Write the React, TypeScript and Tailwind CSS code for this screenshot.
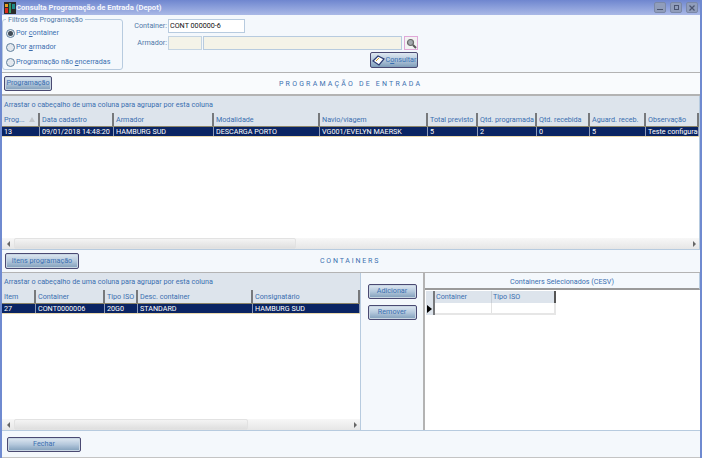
import React from 'react'

const topColumns = [
    { label: 'Prog...', width: 'w-[38px]', value: '13' },
    { label: 'Data cadastro', width: 'w-[74px]', value: '09/01/2018 14:48:20' },
    { label: 'Armador', width: 'w-[100px]', value: 'HAMBURG SUD' },
    { label: 'Modalidade', width: 'w-[106px]', value: 'DESCARGA PORTO' },
    { label: 'Navio/viagem', width: 'w-[108px]', value: 'VG001/EVELYN MAERSK' },
    { label: 'Total previsto', width: 'w-[50px]', value: '5' },
    { label: 'Qtd. programada', width: 'w-[59px]', value: '2' },
    { label: 'Qtd. recebida', width: 'w-[53px]', value: '0' },
    { label: 'Aguard. receb.', width: 'w-[56px]', value: '5' },
    { label: 'Observação', width: 'w-[53px]', value: 'Teste configuração' },
]

const bottomColumns = [
    { label: 'Item', width: 'w-[34px]', value: '27' },
    { label: 'Container', width: 'w-[69px]', value: 'CONT0000006' },
    { label: 'Tipo ISO', width: 'w-[33px]', value: '20G0' },
    { label: 'Desc. container', width: 'w-[115px]', value: 'STANDARD' },
    { label: 'Consignatário', width: 'w-[107px]', value: 'HAMBURG SUD' },
]

type Column = { label: string; width: string; value: string }

const WinButton = ({ label, className }: { label: string; className: string }) => (
    <button className={`flex items-center justify-center rounded-[2px] border border-[#4a4a72] bg-gradient-to-b from-[#dfe8f1] via-[#b4c8dc] to-[#7f9db9] text-[#3a6fb0] shadow-[inset_0_0_0_1px_#c9d6e3] ${className}`}>
        {label}
    </button>
)

const Header = ({ label, width, sorted }: { label: string; width: string; sorted?: boolean }) => (
    <div className={`relative h-[13px] shrink-0 overflow-hidden whitespace-nowrap border-r-2 border-[#77797c] bg-[#dde4ec] pl-[2px] leading-[13px] text-[#3a6fb0] ${width}`}>
        {label}
        {sorted && <span className="absolute right-[3px] top-[4px] h-0 w-0 border-x-[3px] border-b-[5px] border-x-transparent border-b-[#c3c7cc]" />}
    </div>
)

const Grid = ({ columns, scrollWidth, sortFirst }: { columns: Column[]; scrollWidth: string; sortFirst?: boolean }) => (
    <div className="flex min-h-0 min-w-0 flex-1 flex-col overflow-hidden bg-white">
        <div className="h-[17px] shrink-0 bg-[#dde4ec] pl-[2px] leading-[18px] text-[#3a6fb0]">
            Arrastar o cabeçalho de uma coluna para agrupar por esta coluna
        </div>
        <div className="flex shrink-0">
            {columns.map((c, i) => (
                <Header key={c.label} label={c.label} width={c.width} sorted={sortFirst && i === 0} />
            ))}
        </div>
        <div className="flex h-[11px] shrink-0 border-y border-b-[#e9d8ac] border-t-[#8b8468] bg-[#0a2463] text-white">
            {columns.map(c => (
                <div key={c.label} className={`shrink-0 overflow-hidden whitespace-nowrap border-r border-[#8c9ab8] pl-[2px] leading-[9px] ${c.width}`}>
                    {c.value}
                </div>
            ))}
        </div>
        <div className="flex-1" />
        <div className="flex h-[11px] shrink-0 items-center bg-gradient-to-b from-[#f7f7f7] to-[#e6e6e6]">
            <div className="flex w-[12px] shrink-0 justify-center">
                <span className="h-0 w-0 border-y-[3px] border-r-[3px] border-y-transparent border-r-[#666]" />
            </div>
            <div className={`h-[11px] rounded-[2px] border border-[#e2e2e2] bg-gradient-to-b from-[#f4f4f4] to-[#dfdfdf] ${scrollWidth}`} />
            <div className="flex flex-1 justify-end pr-[3px]">
                <span className="h-0 w-0 border-y-[3px] border-l-[3px] border-y-transparent border-l-[#666]" />
            </div>
        </div>
    </div>
)

const Radio = ({ label, checked }: { label: React.ReactNode; checked?: boolean }) => (
    <div className="flex h-[14.5px] items-center whitespace-nowrap text-[#3a6fb0]">
        <span className="mr-[1px] flex h-[9px] w-[9px] shrink-0 items-center justify-center rounded-full border border-[#5f7f9c] bg-[#e3e8ee]">
            {checked && <span className="h-[5px] w-[5px] rounded-full bg-[#3f4a55]" />}
        </span>
        {label}
    </div>
)

const App = () => {
    return (
        <div className="flex h-[458px] w-[702px] flex-col overflow-hidden border-x-2 border-x-[#6f8ad0] bg-[#f4f8fc] font-['Roboto',sans-serif] text-[7.2px]">
            {/* barra de titulo */}
            <div className="-mx-[2px] flex h-[15px] shrink-0 items-center bg-gradient-to-b from-[#6f86cf] to-[#aab9e6] pl-[4px] pr-[4px]">
                <svg width="12" height="12" viewBox="0 0 12 12" className="shrink-0">
                    <rect width="12" height="12" fill="#2a2a2a" />
                    <rect x="1" y="6" width="3" height="5" fill="#d92b1c" />
                    <rect x="1" y="2" width="3" height="3" fill="#e8a020" />
                    <rect x="5" y="1" width="2" height="10" fill="#2f9a6a" />
                    <rect x="8" y="2" width="3" height="5" fill="#1f8a8a" />
                </svg>
                <span className="text-[7.7px] font-bold text-[#f4f6fc]">Consulta Programação de Entrada (Depot)</span>
                <div className="ml-auto flex gap-[4px]">
                    <div className="flex h-[11px] w-[12px] items-end justify-center rounded-[2px] border border-[#7a88a8] bg-[#909dbb] pb-[2px]">
                        <span className="h-[1px] w-[6px] bg-[#4a5470]" />
                    </div>
                    <div className="flex h-[11px] w-[12px] items-center justify-center rounded-[2px] border border-[#7a88a8] bg-[#909dbb]">
                        <span className="h-[5px] w-[5px] border border-[#4a5470]" />
                    </div>
                    <div className="flex h-[11px] w-[12px] items-center justify-center rounded-[2px] border border-[#7a88a8] bg-[#909dbb]">
                        <svg width="6" height="6" viewBox="0 0 6 6">
                            <path d="M0.5 0.5l5 5M5.5 0.5l-5 5" stroke="#4a5470" strokeWidth="1.2" />
                        </svg>
                    </div>
                </div>
            </div>

            {/* filtros */}
            <div className="flex h-[58px] shrink-0 border-b-[1px] border-[#b3b3b3]">
                <div className="relative mt-[4px] h-[51px] w-[121px] shrink-0 rounded-[3px] border border-[#b7cbdf] pl-[3px] pt-[6px]">
                    <span className="absolute -top-[5px] left-[3px] bg-[#f4f8fc] px-[2px] text-[#4f78a8]">Filtros da Programação</span>
                    <Radio checked label={<span>Por <u>c</u>ontainer</span>} />
                    <Radio label={<span>Por <u>a</u>rmador</span>} />
                    <Radio label={<span>Programação não <u>e</u>ncerradas</span>} />
                </div>
                <div className="ml-[11px] flex flex-col">
                    <div className="mt-[4px] flex h-[14px] items-center">
                        <span className="w-[33px] text-right text-[#4f78a8]">Container:</span>
                        <div className="ml-[1px] flex h-[14px] w-[77px] items-center border border-[#b7cbdf] bg-white pl-[1px] text-[#111]">CONT 000000-6</div>
                    </div>
                    <div className="mt-[3px] flex h-[14px] items-center">
                        <span className="w-[33px] text-right text-[#4f78a8]">Armador:</span>
                        <div className="ml-[1px] h-[14px] w-[34px] border border-[#c4d4e2] bg-[#f4f3e8]" />
                        <div className="ml-[1px] h-[14px] w-[199px] border border-[#b7cbdf] bg-[#f4f3e8]" />
                        <div className="ml-[2px] flex h-[14px] w-[14px] items-center justify-center border border-[#e0a8d8] bg-[#f2f2f2]">
                            <svg width="11" height="11" viewBox="0 0 11 11">
                                <circle cx="4.5" cy="4.5" r="3" fill="#a3a8ad" stroke="#6a6a6a" strokeWidth="1.2" />
                                <path d="M7 7l3 3" stroke="#5a5a5a" strokeWidth="2" />
                            </svg>
                        </div>
                    </div>
                    <div className="mt-[2px] flex justify-end">
                        <button className="flex h-[16px] w-[48px] items-center justify-center rounded-[2px] border border-[#4a4a72] bg-gradient-to-b from-[#dfe8f1] via-[#b4c8dc] to-[#7f9db9] text-[#3a6fb0]">
                            <svg width="13" height="11" viewBox="0 0 13 11" className="mr-[1px] shrink-0">
                                <path d="M1 6l5-5 6 3-5 6z" fill="#fff" stroke="#2b3a70" strokeWidth="1.2" />
                                <path d="M4 6l3-3" stroke="#d9a520" strokeWidth="1" />
                            </svg>
                            <span>C<u>o</u>nsultar</span>
                        </button>
                    </div>
                </div>
            </div>

            {/* programacao */}
            <div className="relative flex h-[23px] shrink-0 items-center border-b-2 border-[#b3b3b3] bg-[#f9fbfd] pl-[2px]">
                <WinButton label="Programação" className="h-[15px] w-[48px]" />
                <span className="absolute left-[277px] top-[6px] text-[7px] tracking-[2.2px] text-[#3a6fb0]">PROGRAMAÇÃO DE ENTRADA</span>
            </div>
            <div className="flex h-[153px] shrink-0 flex-col border-r border-[#b7cbdf]">
                <Grid columns={topColumns} scrollWidth="w-[282px]" sortFirst />
            </div>

            {/* containers */}
            <div className="relative flex h-[24px] shrink-0 items-center border-y border-t-[#b7cbdf] border-b-[#b3b3b3] bg-[#f4f8fc] pl-[3px]">
                <WinButton label="Itens programação" className="h-[16px] w-[74px]" />
                <span className="absolute left-[318px] top-[6px] text-[7px] tracking-[1.8px] text-[#3a6fb0]">CONTAINERS</span>
            </div>
            <div className="flex h-[158px] shrink-0 border-b border-[#b7cbdf]">
                <div className="flex w-[359px] shrink-0 border-r border-[#b7cbdf]">
                    <Grid columns={bottomColumns} scrollWidth="w-[234px]" />
                </div>
                <div className="flex w-[64px] shrink-0 flex-col items-center gap-[6px] border-r-2 border-[#b3b3b3] pt-[11px]">
                    <WinButton label="Adicionar" className="h-[15px] w-[49px]" />
                    <WinButton label="Remover" className="h-[15px] w-[49px]" />
                </div>
                <div className="flex min-w-0 flex-1 flex-col">
                    <div className="h-[17px] shrink-0 border-b-2 border-r border-b-[#9a9a9a] border-r-[#b7cbdf] text-center leading-[17px] text-[#3a6fb0]">Containers Selecionados (CESV)</div>
                    <div className="flex-1 bg-white pl-[1px] pt-[1px]">
                        <div className="flex h-[12px]">
                            <div className="h-[12px] w-[9px] border-r-2 border-[#77797c] bg-[#dde4ec]" />
                            <div className="w-[57px] border-r border-[#c8ced6] bg-[#dde4ec] pl-[1px] leading-[12px] text-[#3a6fb0]">Container</div>
                            <div className="w-[64px] border-r-2 border-[#555] bg-[#dde4ec] pl-[1px] leading-[12px] text-[#3a6fb0]">Tipo ISO</div>
                        </div>
                        <div className="flex h-[12px] w-[130px] border-b-2 border-[#e6e6e6]">
                            <div className="flex h-[12px] w-[9px] items-center justify-center border-r-2 border-[#77797c] bg-[#dde4ec]">
                                <span className="h-0 w-0 border-y-[4px] border-l-[5px] border-y-transparent border-l-black" />
                            </div>
                            <div className="w-[57px] border-r border-[#e2e2e2]" />
                            <div className="w-[64px] border-r-2 border-[#e6e6e6]" />
                        </div>
                    </div>
                </div>
            </div>

            {/* rodape */}
            <div className="flex flex-1 items-center border-b border-[#c4c4c4] pl-[5px]">
                <WinButton label="Fechar" className="h-[15px] w-[74px]" />
            </div>
        </div>
    )
}

export default App
